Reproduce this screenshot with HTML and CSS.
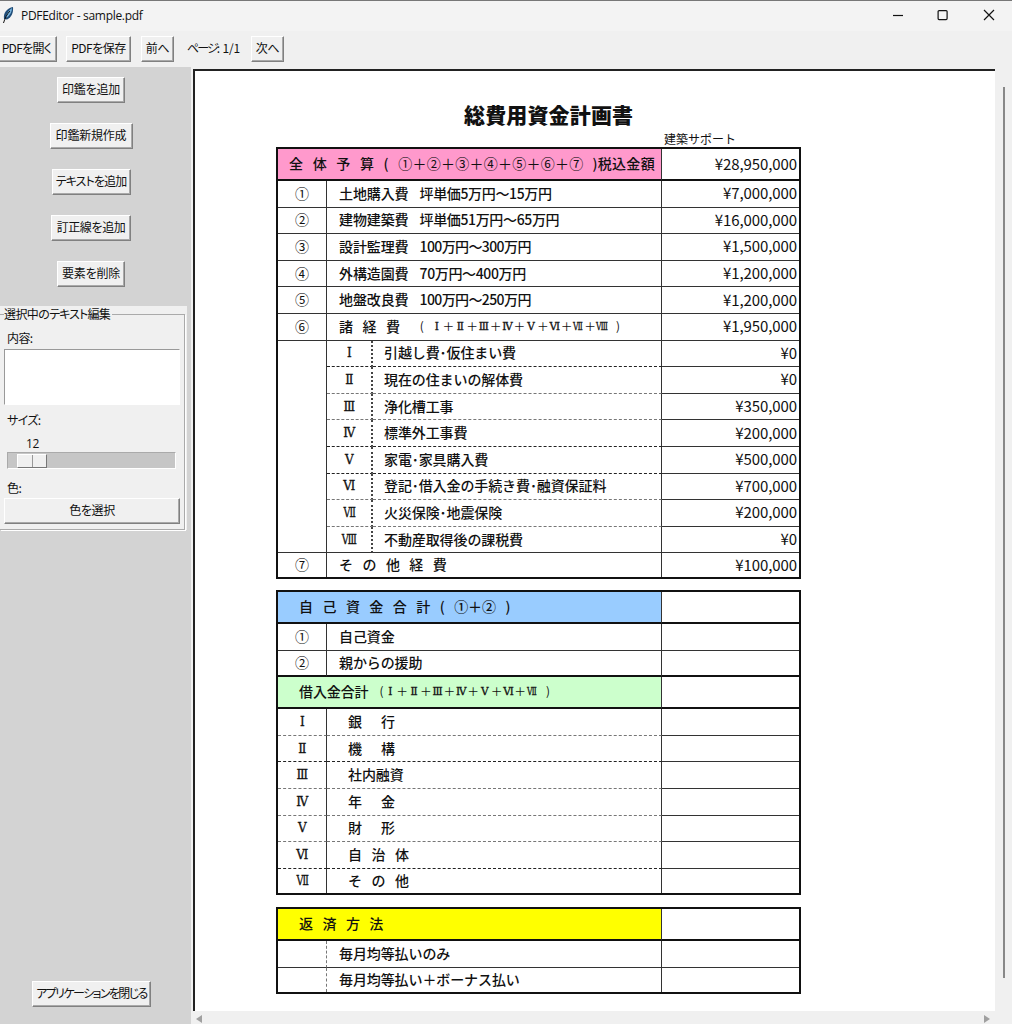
FILE: index.html
```html
<!DOCTYPE html>
<html lang="ja">
<head>
  <meta charset="UTF-8">
  <title>PDFEditor - sample.pdf</title>
  <link rel="stylesheet" href="styles.css">
</head>
<body>
  <header class="titlebar">
    <svg class="feather" width="12" height="18" viewBox="0 0 12 18">
      <path d="M2 13C1 7 5 2 11 1c.5 5-1 10-6 12.500z" fill="#204d78"/>
      <path d="M4 11C5 7 7 4 10 2c0 4-2 7-5 9.500z" fill="#78b5df"/>
      <path d="M1.500 17C3 12 5 8 8 5" fill="none" stroke="#111" stroke-width="1"/>
    </svg>
    <span class="app-title">PDFEditor - sample.pdf</span>
    <svg class="controls" width="106" height="14" viewBox="0 0 106 14" fill="none" stroke="#111" stroke-width="1.200">
      <path d="M1 6.500h10"/>
      <rect x="46.100" y="1.600" width="9" height="9" rx="1"/>
      <path d="M92 1l10 10M102 1l-10 10"/>
    </svg>
  </header>

  <nav class="toolbar">
    <button class="btn open">PDFを開く</button>
    <button class="btn save">PDFを保存</button>
    <button class="btn step">前へ</button>
    <span class="page-label"><span class="kana">ページ</span>: 1/1</span>
    <button class="btn step">次へ</button>
  </nav>

  <main class="main">
    <aside class="sidebar">
      <div class="tools">
        <button class="btn w67">印鑑を追加</button>
        <button class="btn w82">印鑑新規作成</button>
        <button class="btn w78 kana">テキストを追加</button>
        <button class="btn w79">訂正線を追加</button>
        <button class="btn w67">要素を削除</button>
      </div>
      <section class="editor">
        <div class="frame">
          <span class="legend">選択中の<span class="kana">テキスト</span>編集</span>
          <label>内容:</label>
          <div class="textbox"></div>
          <label class="size-label">サイズ:</label>
          <div class="size-value">12</div>
          <div class="trough"><div class="thumb"></div></div>
          <label class="color-label">色:</label>
          <button class="btn color">色を選択</button>
        </div>
      </section>
      <button class="btn close">アプリケーションを閉じる</button>
    </aside>

    <section class="viewer">
      <div class="canvas">
        <h1>総費用資金計画書</h1>
        <div class="support">建築サポート</div>

        <div class="sheet budget">
          <div class="row head pink"><div class="title total"><span class="wide">全 体 予 算 ( </span><span class="sequence">①＋②＋③＋④＋⑤＋⑥＋⑦</span><span class="end">)税込金額</span></div><div class="sum">¥28,950,000</div></div>
          <div class="row"><div class="no">①</div><div class="item">土地購入費<span class="note">坪単価5万円～15万円</span></div><div class="sum">¥7,000,000</div></div>
          <div class="row"><div class="no">②</div><div class="item">建物建築費<span class="note">坪単価51万円～65万円</span></div><div class="sum">¥16,000,000</div></div>
          <div class="row"><div class="no">③</div><div class="item">設計監理費<span class="note round">100万円～300万円</span></div><div class="sum">¥1,500,000</div></div>
          <div class="row"><div class="no">④</div><div class="item">外構造園費<span class="note">70万円～400万円</span></div><div class="sum">¥1,200,000</div></div>
          <div class="row"><div class="no">⑤</div><div class="item">地盤改良費<span class="note round">100万円～250万円</span></div><div class="sum">¥1,200,000</div></div>
          <div class="row"><div class="no">⑥</div><div class="item"><span class="wide">諸 経 費</span><span class="formula costs"><b>(</b><i>Ⅰ</i>＋<i>Ⅱ</i>＋<i>Ⅲ</i>＋<i>Ⅳ</i>＋<i>Ⅴ</i>＋<i>Ⅵ</i>＋<i class="narrow">Ⅶ</i>＋<i class="narrow">Ⅷ</i><b>)</b></span></div><div class="sum">¥1,950,000</div></div>
          <div class="row sub"><div class="no blank"></div><div class="roman">Ⅰ</div><div class="item">引越し費･仮住まい費</div><div class="sum">¥0</div></div>
          <div class="row sub thin"><div class="no blank"></div><div class="roman">Ⅱ</div><div class="item">現在の住まいの解体費</div><div class="sum">¥0</div></div>
          <div class="row sub thin"><div class="no blank"></div><div class="roman">Ⅲ</div><div class="item">浄化槽工事</div><div class="sum">¥350,000</div></div>
          <div class="row sub"><div class="no blank"></div><div class="roman">Ⅳ</div><div class="item">標準外工事費</div><div class="sum">¥200,000</div></div>
          <div class="row sub"><div class="no blank"></div><div class="roman">Ⅴ</div><div class="item">家電･家具購入費</div><div class="sum">¥500,000</div></div>
          <div class="row sub thin"><div class="no blank"></div><div class="roman">Ⅵ</div><div class="item">登記･借入金の手続き費･融資保証料</div><div class="sum">¥700,000</div></div>
          <div class="row sub thin"><div class="no blank"></div><div class="roman"><span class="narrow">Ⅶ</span></div><div class="item">火災保険･地震保険</div><div class="sum">¥200,000</div></div>
          <div class="row sub final"><div class="no"></div><div class="roman"><span class="narrow">Ⅷ</span></div><div class="item">不動産取得後の課税費</div><div class="sum">¥0</div></div>
          <div class="row"><div class="no">⑦</div><div class="item wide">そ の 他 経 費</div><div class="sum">¥100,000</div></div>
        </div>

        <div class="sheet funds">
          <div class="row head blue"><div class="title"><span class="wide">自 己 資 金 合 計 ( </span>①＋②<span class="wide"> )</span></div><div class="sum"></div></div>
          <div class="row"><div class="no">①</div><div class="item">自己資金</div><div class="sum"></div></div>
          <div class="row heavy"><div class="no">②</div><div class="item">親からの援助</div><div class="sum"></div></div>
          <div class="row head green"><div class="title">借入金合計<span class="formula loans"><b>(</b><i>Ⅰ</i>＋<i>Ⅱ</i>＋<i>Ⅲ</i>＋<i>Ⅳ</i>＋<i>Ⅴ</i>＋<i>Ⅵ</i>＋<i class="narrow">Ⅶ</i><b>)</b></span></div><div class="sum"></div></div>
          <div class="row loan thin"><div class="no">Ⅰ</div><div class="item pair">銀 行</div><div class="sum"></div></div>
          <div class="row loan"><div class="no">Ⅱ</div><div class="item pair">機 構</div><div class="sum"></div></div>
          <div class="row loan thin"><div class="no">Ⅲ</div><div class="item">社内融資</div><div class="sum"></div></div>
          <div class="row loan thin"><div class="no">Ⅳ</div><div class="item pair">年 金</div><div class="sum"></div></div>
          <div class="row loan thin"><div class="no">Ⅴ</div><div class="item pair">財 形</div><div class="sum"></div></div>
          <div class="row loan"><div class="no">Ⅵ</div><div class="item wide">自 治 体</div><div class="sum"></div></div>
          <div class="row loan"><div class="no"><span class="narrow">Ⅶ</span></div><div class="item wide">そ の 他</div><div class="sum"></div></div>
        </div>

        <div class="sheet payment">
          <div class="row head yellow"><div class="title wide">返 済 方 法</div><div class="sum"></div></div>
          <div class="row"><div class="no"></div><div class="item">毎月均等払いのみ</div><div class="sum"></div></div>
          <div class="row"><div class="no"></div><div class="item">毎月均等払い＋ボーナス払い</div><div class="sum"></div></div>
        </div>
      </div>
      <div class="vscroll"><div class="vthumb"></div></div>
      <div class="hscroll"><span class="arrow left"></span><span class="arrow right"></span></div>
    </section>
  </main>
</body>
</html>
```
FILE: styles.css
```css
* {
  box-sizing: border-box;
}

body {
  margin: 0;
  width: 1012px;
  height: 1024px;
  overflow: hidden;
  display: flex;
  flex-direction: column;
  background: #f0f0f0;
  color: #111;
  font: 12px/16px "Noto Sans CJK JP", sans-serif;
}

/* window chrome */
.titlebar {
  height: 31px;
  display: flex;
  align-items: center;
  border-top: 1px solid #777;
  background: #f3f3f3;
  padding-left: 2px;
}

.feather {
  margin-bottom: 2px;
}

.app-title {
  margin-left: 7px;
  font: 12px/16px "Open Sans", sans-serif;
  letter-spacing: -0.3px;
}

.controls {
  margin-left: auto;
  margin-right: 14px;
}

.toolbar {
  height: 36px;
  display: flex;
  align-items: center;
}

.btn {
  height: 26px;
  padding: 0 0 2px;
  border: 1px solid;
  border-color: #fff #808080 #808080 #fff;
  box-shadow: inset -1px -1px #a9a9a9;
  background: #f0f0f0;
  color: #111;
  font: 12px/16px "Noto Sans CJK JP", sans-serif;
  font-feature-settings: "palt";
  letter-spacing: -0.4px;
  white-space: nowrap;
}

.open {
  width: 61px;
  margin-left: -4px;
  letter-spacing: -0.7px;
}

.save {
  width: 65px;
  margin: 0 10px 0 9px;
  letter-spacing: -0.5px;
}

.step {
  width: 33px;
}

.page-label {
  width: 50px;
  margin: 0 14px 2px 13px;
  white-space: nowrap;
  font-feature-settings: "palt";
  letter-spacing: -0.2px;
}

.page-label .kana {
  letter-spacing: -1.9px;
}

.main {
  flex: 1;
  display: flex;
}

/* left panel */
.sidebar {
  width: 191px;
  display: flex;
  flex-direction: column;
  background: #d3d3d3;
}

.tools {
  display: flex;
  flex-direction: column;
  align-items: center;
  gap: 20px;
  padding: 10px 9px 19px 0;
}

.w67 { width: 68px; }
.w78 { width: 79px; }
.w79 { width: 80px; }
.w82 { width: 83px; }

.w82,
.w67 {
  letter-spacing: -0.2px;
}

.kana {
  letter-spacing: -0.9px;
}

.editor {
  width: 187px;
  height: 224px;
  padding-top: 8px;
  background: #f0f0f0;
}

.frame {
  height: 216px;
  width: 185px;
  border: 1px solid #aaa;
  border-left: 0;
  box-shadow: 1px 1px #fff;
  padding-left: 4px;
  display: flex;
  flex-direction: column;
  font-feature-settings: "palt";
  letter-spacing: -0.6px;
}

.frame label {
  padding-left: 3px;
}

.legend {
  align-self: flex-start;
  margin-top: -9px;
  padding-right: 2px;
  background: #f0f0f0;
  height: 24px;
}

.textbox {
  width: 176px;
  height: 56px;
  margin-top: 3px;
  border: 1px solid;
  border-color: #999 #fff #fff #999;
  background: #fff;
}

.size-label {
  margin-top: 7px;
}

.size-value {
  margin: 8px 0 0 22px;
  font: 12px/16px "Open Sans", sans-serif;
  letter-spacing: -0.4px;
}

.trough {
  width: 169px;
  height: 17px;
  margin-left: 3px;
  padding: 1px 9px;
  background: #c6c6c6;
  border: 1px solid;
  border-color: #aaa #fff #fff #aaa;
}

.thumb {
  width: 30px;
  height: 14px;
  background: linear-gradient(90deg, transparent 14px, #999 14px, #999 15px, transparent 15px) #f0f0f0;
  border: 1px solid;
  border-color: #fff #777 #777 #fff;
}

.color-label {
  margin-top: 11px;
}

.color {
  width: 176px;
  margin-top: 2px;
}

.close {
  width: 119px;
  margin: auto 0 17px 32px;
  letter-spacing: -1.6px;
}

/* document area */
.viewer {
  width: 821px;
  display: grid;
  grid-template-columns: 804px 17px;
  grid-template-rows: 944px 13px;
}

.canvas {
  margin-top: 2px;
  border: solid #222;
  border-width: 2px 0 0 2px;
  margin-left: 2px;
  background: #fff;
  padding-left: 81px;
}

h1 {
  margin: 29px 0 0;
  padding-left: 188px;
  font: 900 21px/28px "Noto Sans CJK JP", sans-serif;
  letter-spacing: 0.15px;
}

.support {
  padding-left: 388px;
  margin-top: 3px;
  height: 16px;
  font-size: 12px;
}

.sheet {
  width: 525px;
  border: 2px solid #111;
  display: flex;
  flex-direction: column;
  font-size: 14px;
  font-weight: 500;
  line-height: 20px;
  letter-spacing: -0.1px;
}

.budget { height: 432px; }
.funds { height: 305px; margin-top: 11px; }
.payment { height: 87px; margin-top: 12px; }

.row {
  display: grid;
  grid-template-columns: 49px 335px 137px;
  height: 26.6px;
  flex-shrink: 0;
}

.row > div {
  display: flex;
  align-items: center;
  padding-bottom: 2px;
  border-bottom: 1px solid #333;
  border-right: 1px solid #333;
  white-space: pre;
}

.row > .sum {
  justify-content: flex-end;
  border-right: 0;
  padding-right: 2px;
  padding-bottom: 1px;
  font-size: 15px;
  font-weight: 400;
}

.row > .no {
  justify-content: center;
  font-weight: 400;
}

.row > .item {
  padding-left: 12px;
}

.note {
  margin-left: 11px;
  letter-spacing: -0.35px;
}

.note.round {
  letter-spacing: -0.6px;
}

.head {
  height: 32px;
  grid-template-columns: 384px 137px;
}

.head > div,
.row.heavy > div {
  border-bottom: 2px solid #111;
}

.head > .title {
  padding-left: 21px;
}

.head > .total {
  padding-left: 11px;
}

.total .wide {
  letter-spacing: 0;
}

.sequence {
  font-weight: 400;
  letter-spacing: 0.25px;
}

.end {
  margin-left: 9px;
  letter-spacing: 0.3px;
}

.wide {
  word-spacing: 6.5px;
}

.pair {
  word-spacing: 16px;
}

.pink .title { background: #ff99cc; }
.blue .title { background: #99ccff; }
.green .title { background: #ccffcc; }
.yellow .title { background: #ffff00; }

/* cost breakdown rows */
.sub {
  grid-template-columns: 49px 46px 289px 137px;
}

.sub > .blank {
  border-bottom: 0;
}

.sub > .roman {
  justify-content: center;
  border-right: 2px dotted #444;
}

.sub > .item {
  padding-left: 11px;
}

.sub > .roman,
.sub > .item,
.loan > .no,
.loan > .item {
  border-bottom: 1px dashed #222;
}

.sub.thin > .roman,
.sub.thin > .item,
.loan.thin > .no,
.loan.thin > .item {
  border-bottom-color: #777;
}

.sub.final > div {
  border-bottom: 1px solid #333;
}

.row > .roman,
.loan > .no {
  font: 12px/20px "DejaVu Serif", serif;
  letter-spacing: -0.5px;
  padding-bottom: 0;
  -webkit-text-stroke: 0.3px #111;
}

.formula {
  display: flex;
  padding-top: 1px;
  font-size: 11.8px;
  font-weight: 400;
  letter-spacing: 0;
}

.formula i {
  width: 11.8px;
  display: flex;
  justify-content: center;
  font: 10.5px/21px "DejaVu Serif", serif;
  -webkit-text-stroke: 0.3px #111;
}

.narrow {
  transform: scaleX(0.8);
}

.formula .narrow {
  transform: scaleX(0.72);
}

.loan > .item {
  padding-left: 21px;
}

.formula b {
  font-weight: 400;
}

.costs { margin-left: 20px; }
.costs b { width: 11px; }
.costs b:last-child { margin-left: 8px; }
.loans { margin-left: 11px; }
.loans b { width: 5px; }
.loans b:last-child { margin-left: 8px; }

.row:last-child {
  flex: 1;
  height: auto;
}

.row:last-child > div {
  border-bottom: 0;
}

.funds .head,
.payment .head {
  height: 32px;
}

.payment .row > .no {
  border-right: 1px dashed #777;
}

/* scrollbars */
.vscroll {
  padding: 20px 0 0 8px;
}

.vthumb {
  width: 2px;
  height: 891px;
  background: #888;
}

.hscroll {
  display: flex;
  align-items: center;
  justify-content: space-between;
  padding: 3px 5px 0;
}

.arrow {
  border: 4px solid transparent;
}

.left {
  border-left: 0;
  border-right: 6px solid #a0a0a0;
}

.right {
  border-right: 0;
  border-left: 6px solid #a0a0a0;
}
```
